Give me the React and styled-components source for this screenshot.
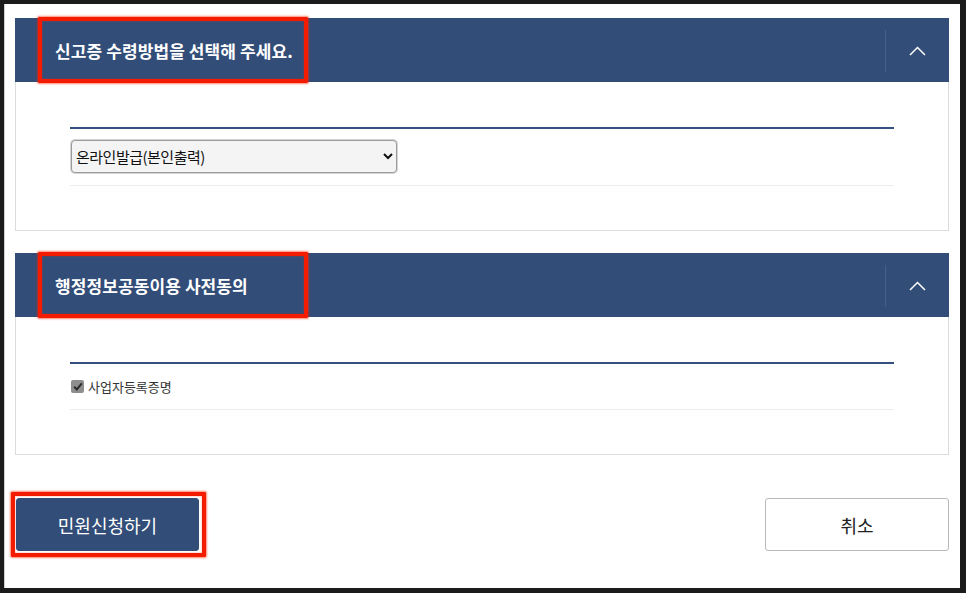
import React from 'react';
import styled, { createGlobalStyle } from 'styled-components';

const GlobalStyle = createGlobalStyle`
  html, body { margin: 0; padding: 0; background: #1b1b1b; }
  body { font-family: "Noto Sans CJK KR", "Noto Sans", sans-serif; }
  * { box-sizing: border-box; }
`;

const Frame = styled.div`
  width: 966px;
  height: 593px;
  padding: 4px 6px 5px 4px;
  background: #1b1b1b;
`;

const Sheet = styled.div`
  height: 100%;
  background: #fff;
  border-left: 1px solid #cfcfcf;
  padding: 14px 11px 0 10px;
  display: flex;
  flex-direction: column;
`;

const Panel = styled.section`
  display: flex;
  flex-direction: column;
  margin-bottom: ${(p) => p.gap || 0}px;
`;

const Header = styled.div`
  height: 64px;
  background: #324d78;
  display: flex;
  align-items: center;
  padding-left: 23px;
`;

// red hand-drawn annotation around a title or button
const Marked = styled.div`
  border: 4px solid #f31c00;
  box-shadow: 0 0 2px 1px rgba(255, 40, 0, 0.55), inset 0 0 2px rgba(255, 40, 0, 0.5);
  border-radius: 1px;
`;

const TitleMark = styled(Marked)`
  width: 270px;
  height: 66px;
  display: flex;
  align-items: center;
  padding-left: 13px;
`;

const Title = styled.h2`
  margin: 0;
  color: #fff;
  font-size: 17px;
  font-weight: 700;
  letter-spacing: 0.1px;
  white-space: nowrap;
`;

const HeaderSide = styled.div`
  margin-left: auto;
  align-self: stretch;
  display: flex;
  align-items: center;
  padding: 12px 0 10px;
`;

const Divider = styled.div`
  width: 1px;
  align-self: stretch;
  background: #455f8a;
`;

const Toggle = styled.button`
  width: 63px;
  height: 100%;
  border: 0;
  background: transparent;
  display: flex;
  align-items: center;
  justify-content: center;
  padding: 0;
  cursor: pointer;
`;

const Body = styled.div`
  border: 1px solid #dcdcdc;
  border-top: 0;
  padding: 45px 54px 44px;
`;

const Rule = styled.div`
  height: 2px;
  background: #34507e;
`;

const Row = styled.div`
  display: flex;
  align-items: center;
  border-bottom: 1px solid #ececec;
  padding: ${(p) => p.pad};
`;

const Select = styled.select`
  width: 326px;
  height: 33px;
  margin-left: 1px;
  padding: 0 6px 0 0;
  font-family: "Noto Sans CJK KR", sans-serif;
  font-size: 15px;
  letter-spacing: -0.5px;
  color: #111;
  background: #f4f4f4;
  border: 1px solid #9c9c9c;
  box-shadow: 0 0 0 1px #d4d4d4;
  border-radius: 4px;
`;

const Check = styled.label`
  display: flex;
  align-items: center;
  gap: 4px;
  height: 20px;
  font-size: 13px;
  letter-spacing: 0;
  color: #333;
`;

const CheckBox = styled.span`
  width: 13px;
  height: 13px;
  margin-left: 1px;
  border-radius: 2px;
  background: #8e8e8e;
  display: flex;
  align-items: center;
  justify-content: center;
`;

const Actions = styled.div`
  display: flex;
  justify-content: space-between;
  align-items: center;
  margin-top: 37px;
`;

const ButtonMark = styled(Marked)`
  margin-left: -4px;
  padding: 2px 3px 2px 1px;
`;

const Button = styled.button`
  width: ${(p) => p.w}px;
  height: 53px;
  font-family: "Noto Sans CJK KR", sans-serif;
  font-size: 18px;
  border-radius: 3px;
  cursor: pointer;
  background: ${(p) => (p.primary ? '#324d78' : '#fff')};
  color: ${(p) => (p.primary ? '#fff' : '#222')};
  border: 1px solid ${(p) => (p.primary ? '#324d78' : '#b9b9b9')};
`;

const Chevron = () => (
  <svg width="17" height="10" viewBox="0 0 17 10">
    <path d="M1 9 L8.5 1.5 L16 9" fill="none" stroke="#fff" strokeWidth="1.5" />
  </svg>
);

const Tick = () => (
  <svg width="10" height="9" viewBox="0 0 10 9">
    <path d="M1.2 4.8 L3.8 7.4 L8.8 1.4" fill="none" stroke="#2a2a2a" strokeWidth="2" />
  </svg>
);

const Section = ({ title, gap, children }) => (
  <Panel gap={gap}>
    <Header>
      <TitleMark>
        <Title>{title}</Title>
      </TitleMark>
      <HeaderSide>
        <Divider />
        <Toggle aria-label="접기">
          <Chevron />
        </Toggle>
      </HeaderSide>
    </Header>
    <Body>
      <Rule />
      {children}
    </Body>
  </Panel>
);

const App = () => {
  return (
    <>
      <GlobalStyle />
      <Frame>
        <Sheet>
          <Section title="신고증 수령방법을 선택해 주세요." gap={22}>
            <Row pad="11px 0 12px">
              <Select defaultValue="online">
                <option value="online">온라인발급(본인출력)</option>
              </Select>
            </Row>
          </Section>
          <Section title="행정정보공동이용 사전동의">
            <Row pad="12px 0 13px">
              <Check>
                <CheckBox role="checkbox" aria-checked="true">
                  <Tick />
                </CheckBox>
                사업자등록증명
              </Check>
            </Row>
          </Section>
          <Actions>
            <ButtonMark>
              <Button primary w={183}>민원신청하기</Button>
            </ButtonMark>
            <Button w={184}>취소</Button>
          </Actions>
        </Sheet>
      </Frame>
    </>
  );
};

export default App;
